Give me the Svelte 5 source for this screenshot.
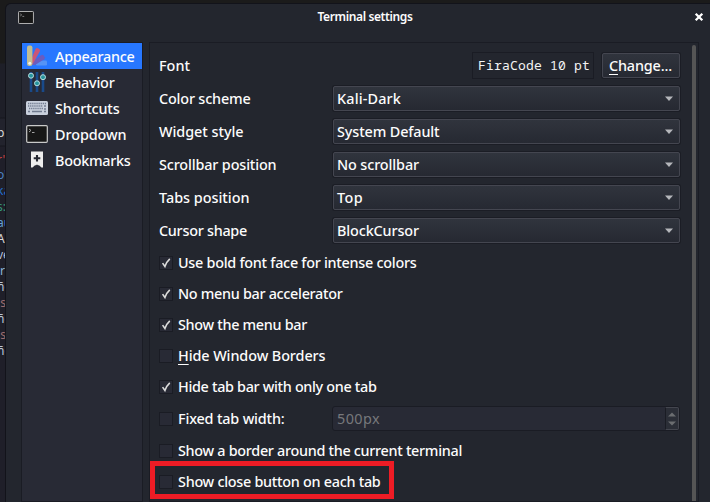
<script>
  // Sets tracking so a label occupies its designed width.
  function fit(node, width) {
    const count = Array.from(node.textContent).length;
    const natural = node.getBoundingClientRect().width;
    node.style.letterSpacing = `${(width - natural) / count}px`;
  }

  const pages = [
    { id: 'appearance', label: 'Appearance', w: 79.5 },
    { id: 'behavior', label: 'Behavior', w: 59.5 },
    { id: 'shortcuts', label: 'Shortcuts', w: 64.5 },
    { id: 'dropdown', label: 'Dropdown', w: 71.5 },
    { id: 'bookmarks', label: 'Bookmarks', w: 75.5 }
  ];
  const combos = [
    { label: 'Color scheme', w: 91.5, value: 'Kali-Dark', vw: 64 },
    { label: 'Widget style', w: 84.5, value: 'System Default', vw: 102.5 },
    { label: 'Scrollbar position', w: 117.5, value: 'No scrollbar', vw: 82 },
    { label: 'Tabs position', w: 90.5, value: 'Top', vw: 26 },
    { label: 'Cursor shape', w: 88, value: 'BlockCursor', vw: 82 }
  ];
  const options = [
    { label: 'Use bold font face for intense colors', w: 238.5, on: true },
    { label: 'No menu bar accelerator', w: 164.5, on: true },
    { label: 'Show the menu bar', w: 129, on: true },
    { label: 'Hide Window Borders', w: 147.5, on: false, key: true },
    { label: 'Hide tab bar with only one tab', w: 198.5, on: true },
    { label: 'Fixed tab width:', w: 106.5, on: false, spin: true },
    { label: 'Show a border around the current terminal', w: 284, on: false },
    { label: 'Show close button on each tab', w: 202.5, on: false, marked: true }
  ];
  const output = [
    ['p', '#d8d8d8', 133], ["r'", '#cc4444', 160], ["o'", '#4b83c4', 175], ['ka', '#236fd0', 191],
    ['s:', '#36967a', 207], ['au', '#62a0d8', 223], ['A', '#d8d8d8', 239], ['ve', '#b5bfd8', 255],
    ['ir', '#8cb7d8', 271], ['ñé', '#bcc7d8', 287], ['.s', '#9b6d70', 303], ['ñé', '#bcc7d8', 319],
    ['.s', '#9b6d70', 335], ['ñé', '#bcc7d8', 351]
  ];
</script>

{#snippet terminal(w, h)}
  <svg width={w} height={h} viewBox="0 0 22 18">
    <rect x=".7" y=".7" width="20.6" height="16.6" rx="1" fill="#171717" stroke="#c9c9c9" stroke-width="1.2" />
    <path d="M3 4l2 1.4L3 7M6 7.5h2.5" fill="none" stroke="#a5a5a5" />
  </svg>
{/snippet}

<div class="desktop">
  <div class="behind">
    {#each output as [text, color, y]}
      <span style="top:{y - 8}px;color:{color}">{text}</span>
    {/each}
  </div>
  <section class="window">
    <header>
      <div class="winicon">{@render terminal(16, 13)}</div>
      <h1><span use:fit={95}>Terminal settings</span></h1>
      <svg class="close" width="10" height="10" viewBox="0 0 10 10"><path d="M1.7 1.7l6.6 6.6M8.3 1.7L1.7 8.3" stroke="#fff" stroke-width="2.3" /></svg>
    </header>
    <main>
      <nav>
        {#each pages as page, i}
          <div class="page" class:selected={i === 0}>
            <div class="icon">
              {#if page.id === 'appearance'}
                <svg width="22" height="22" viewBox="0 0 22 22">
                  <rect x="10" y="15.5" width="11" height="5" rx="1.2" fill="#5593f5" />
                  <path d="M5 18L15.2 10.2Q16.6 9.4 17.6 10.5L18.8 12.2Q19.4 13.3 18.2 14.2L9 20H5z" fill="#6a5cc0" />
                  <path d="M4.5 16L9.3 4.4Q10.2 2.4 12 3.2L13.2 3.9Q14.6 4.8 13.8 6.6L6.8 19z" fill="#c85678" />
                  <rect x="1" y="0.6" width="5.4" height="20.4" rx="2" fill="#c2bd91" />
                  <circle cx="3.8" cy="18.3" r="1.5" fill="#f2f2ee" />
                </svg>
              {:else if page.id === 'behavior'}
                <svg width="22" height="22" viewBox="0 0 22 22">
                  <path d="M5 1v20M11 1v20M17 1v20" stroke="#194a8a" stroke-width="2.6" />
                  <g fill="#27949d" stroke="#b7dce0" stroke-width="1"><circle cx="5" cy="4.7" r="2.5" /><circle cx="11" cy="12.3" r="2.5" /><circle cx="17" cy="6.2" r="2.5" /></g>
                </svg>
              {:else if page.id === 'shortcuts'}
                <svg width="22" height="14" viewBox="0 0 22 14">
                  <rect width="22" height="14" rx="1.5" fill="#c9d0dd" />
                  <path d="M2 2.5h18M2 5h15M3 7.5h14" stroke="#717b90" stroke-width="1.3" stroke-dasharray="1.3 .8" />
                  <path d="M18 5h2M18 8h2M2 10.5h2M6 10.5h10M18 10.5h2" stroke="#717b90" stroke-width="1.3" />
                </svg>
              {:else if page.id === 'dropdown'}
                {@render terminal(22, 18)}
              {:else}
                <svg width="22" height="20" viewBox="0 0 22 20">
                  <path d="M5 1.5h12v16h-1.5L13 15.2h-1L11 14.4l-1 .8H9L6.5 17.5H5z" fill="#eee" />
                  <path d="M11 5v6.6M7.7 8.3h6.6" stroke="#252731" stroke-width="2.1" />
                </svg>
              {/if}
            </div>
            <span use:fit={page.w}>{page.label}</span>
          </div>
        {/each}
      </nav>
      <div class="pane">
        <div class="form">
          <div class="row">
            <div class="label"><span use:fit={31}>Font</span></div>
            <div class="sample"><span use:fit={112}>FiraCode 10 pt</span></div>
            <div class="button"><span use:fit={63}><u>C</u>hange...</span></div>
          </div>
          {#each combos as item}
            <div class="row">
              <div class="label"><span use:fit={item.w}>{item.label}</span></div>
              <div class="combo">
                <span use:fit={item.vw}>{item.value}</span>
                <svg width="8" height="5" viewBox="0 0 8 5"><path d="M0 .5h8L4 5z" fill="#b5b7bb" /></svg>
              </div>
            </div>
          {/each}
          {#each options as item}
            <div class="check" class:tall={item.spin} class:marked={item.marked}>
              <div class="box">
                {#if item.on}
                  <svg width="12" height="12" viewBox="0 0 12 12"><path d="M2.6 6.1l2.3 3.3Q6.3 5 9.8 1.8" fill="none" stroke="#dcdcdc" stroke-width="1.6" /></svg>
                {/if}
              </div>
              <span use:fit={item.w}>{#if item.key}<u>{item.label[0]}</u>{item.label.slice(1)}{:else}{item.label}{/if}</span>
              {#if item.spin}
                <div class="spin">
                  <span use:fit={43}>500px</span>
                  <div class="steps">
                    <svg width="8" height="14" viewBox="0 0 8 14"><path d="M0 4.5h8L4 .5zM0 9.5h8l-4 4z" fill="#6b6d70" /></svg>
                  </div>
                </div>
              {/if}
            </div>
          {/each}
        </div>
        <div class="scroll"></div>
      </div>
    </main>
  </section>
</div>

<style>
  :global(body) { background: #1b1b1b; overflow: hidden; }
  .desktop {
    position: relative; box-sizing: border-box; width: 710px; height: 502px; overflow: hidden;
    padding: 4px 0 0 6px; background: #1b1b1b;
    font: 500 14.4px/20px "Noto Sans", sans-serif; color: #fcfcfc;
  }
  .behind {
    position: absolute; left: 0; top: 0; width: 5px; height: 502px; overflow: hidden;
    background: linear-gradient(#1b1b1b 63px, #1e1f28 64px, #1e1f28 117px, #15161d 118px, #22232d 119px, #22232d 145px, #15161d 146px, #1f1f29 147px);
  }
  .behind span { position: absolute; left: -3px; font: 12px/15px "Noto Sans", sans-serif; white-space: pre; }
  .window {
    position: relative; display: flex; flex-direction: column; box-sizing: border-box; height: 498px;
    background: #23262e; border-radius: 5px 0 0 0; box-shadow: 0 0 0 1px #12131a;
  }
  header { display: flex; align-items: center; height: 26px; padding: 0 6px 0 12px; }
  .winicon { width: 16px; display: flex; }
  h1 { flex: 1; margin: 0; text-align: center; font-size: 12px; font-weight: 600; line-height: 18px; padding-left: 2px; }
  .close { display: block; }
  span { white-space: pre; }
  main { flex: 1; display: flex; gap: 6px; padding: 12px 11px 0 15px; }
  nav { box-sizing: border-box; width: 122px; height: 460px; border: 1px solid #1a1c24; background: #282a35; }
  .page { display: flex; align-items: center; height: 26px; padding-left: 4px; gap: 7px; }
  .page > span { padding-top: 1px; }
  .page.selected { background: #2777ff; }
  .icon { width: 22px; display: flex; align-items: center; }
  .icon svg { display: block; }
  .pane {
    box-sizing: border-box; width: 550px; height: 460px; display: flex;
    border: 1px solid #1a1c24; padding: 0 2px 0 9px;
  }
  .form { width: 521px; padding-top: 6px; }
  .scroll { width: 4px; margin: 2px 0 0 12px; background: #555; border-radius: 2px 2px 0 0; }
  .row { display: flex; align-items: center; height: 33px; }
  .label { width: 174px; flex: none; }
  .combo, .button {
    box-sizing: border-box; height: 25px; display: flex; align-items: center; border: 1px solid #444650;
    border-radius: 2px; background: linear-gradient(#30343d, #262932); box-shadow: 0 0 0 1px #1b1d25;
  }
  .combo { width: 347px; padding: 0 6px 0 3px; justify-content: space-between; }
  .button { width: 78px; margin-left: 8px; padding-left: 6px; }
  .sample {
    box-sizing: border-box; height: 27px; width: 122px; margin-left: 139px; margin-right: 0;
    border: 1px solid #1a1c24; padding: 3px 0 0 5px; font: 400 13px/18px "DejaVu Sans Mono", monospace;
    font-family: "Noto Sans Mono", "DejaVu Sans Mono", monospace; color: #f4f4f4;
  }
  u { text-decoration: underline; text-underline-offset: 3px; text-decoration-thickness: 1px; text-decoration-skip-ink: none; }
  .check { position: relative; display: flex; align-items: center; height: 31px; }
  .tall { height: 33px; }
  .box {
    box-sizing: border-box; width: 14px; height: 14px; margin-right: 5px; flex: none;
    border: 1px solid #1a1c24; background: #282a35;
  }
  .box svg { display: block; }
  .spin {
    position: relative; box-sizing: border-box; display: flex; align-items: center; justify-content: space-between;
    width: 348px; height: 25px; margin: 0 -1px 0 47.5px; padding-left: 4px; flex: none;
    background: #282a35; border: 1px solid #1a1c24; border-radius: 3px; color: #77787c; font-weight: 400;
  }
  .steps {
    box-sizing: border-box; width: 14px; height: 23px; display: flex; align-items: center; justify-content: center;
    border: 1px solid #44464f; border-left: 1px solid #1a1c24; background: #2b2e37; border-radius: 0 2px 2px 0;
  }
  .marked::after {
    content: ''; position: absolute; box-sizing: border-box; left: -9px; top: -5px; width: 244px; height: 38px;
    border: 5px solid #ee1c25;
  }
</style>
